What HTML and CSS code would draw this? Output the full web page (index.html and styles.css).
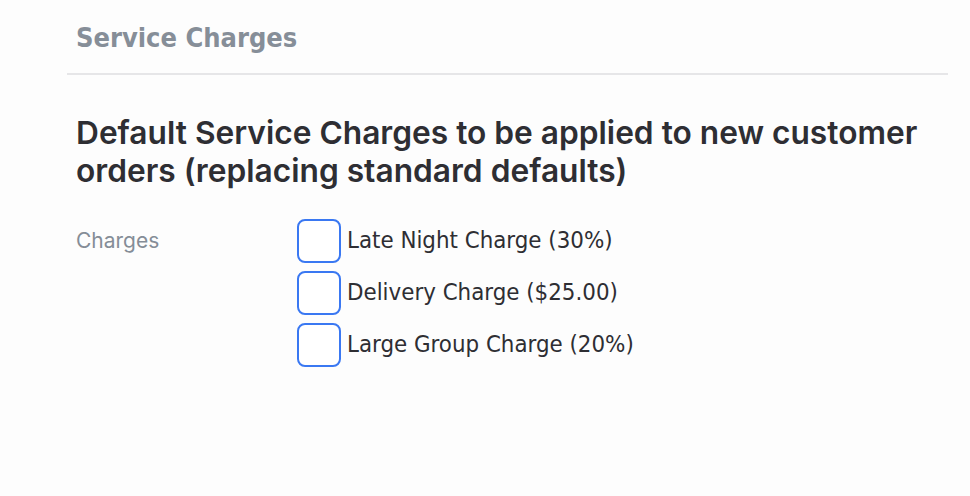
FILE: index.html
```html
<!DOCTYPE html>
<html>
<head>
<meta charset="utf-8">
<link rel="stylesheet" href="styles.css">
</head>
<body>
<div class="page">
  <div class="section-head">
    <h2 class="section-title">Service Charges</h2>
  </div>
  <h1 class="lead">Default Service Charges to be applied to new customer orders (replacing standard defaults)</h1>
  <div class="field">
    <div class="field-label">Charges</div>
    <div class="options">
      <label class="option"><span class="box"></span><span class="option-text">Late Night Charge (30%)</span></label>
      <label class="option"><span class="box"></span><span class="option-text">Delivery Charge ($25.00)</span></label>
      <label class="option"><span class="box"></span><span class="option-text">Large Group Charge (20%)</span></label>
    </div>
  </div>
</div>
</body>
</html>
```
FILE: styles.css
```css
html, body {
  margin: 0;
  padding: 0;
  background: #fdfdfd;
}
.page {
  padding: 0 22px 0 67px;
}
.section-head {
  border-bottom: 2px solid #e6e6e8;
  padding: 22px 0 19px 9px;
}
.section-title {
  margin: 0;
  font-family: "DejaVu Sans Condensed", "DejaVu Sans", sans-serif;
  font-stretch: condensed;
  font-weight: bold;
  font-size: 27px;
  line-height: 32px;
  color: #868e98;
}
.lead {
  margin: 39px 0 0 9px;
  font-family: Inter, sans-serif;
  font-weight: 600;
  font-size: 31.7px;
  line-height: 38px;
  color: #2e2e33;
  max-width: 860px;
}
.field {
  display: flex;
  margin: 29px 0 0 9px;
}
.field-label {
  width: 221px;
  padding-top: 6px;
  font-family: Inter, sans-serif;
  font-size: 21px;
  line-height: 32px;
  color: #858d97;
}
.options {
  display: flex;
  flex-direction: column;
  gap: 8px;
}
.option {
  display: flex;
  align-items: center;
  gap: 6px;
}
.box {
  width: 40px;
  height: 40px;
  border: 2px solid #3a78f2;
  border-radius: 8px;
  background: #fff;
}
.option-text {
  font-family: "DejaVu Sans Condensed", "DejaVu Sans", sans-serif;
  font-stretch: condensed;
  font-size: 23.8px;
  color: #2e2e33;
  position: relative;
  top: -1px;
}
```
